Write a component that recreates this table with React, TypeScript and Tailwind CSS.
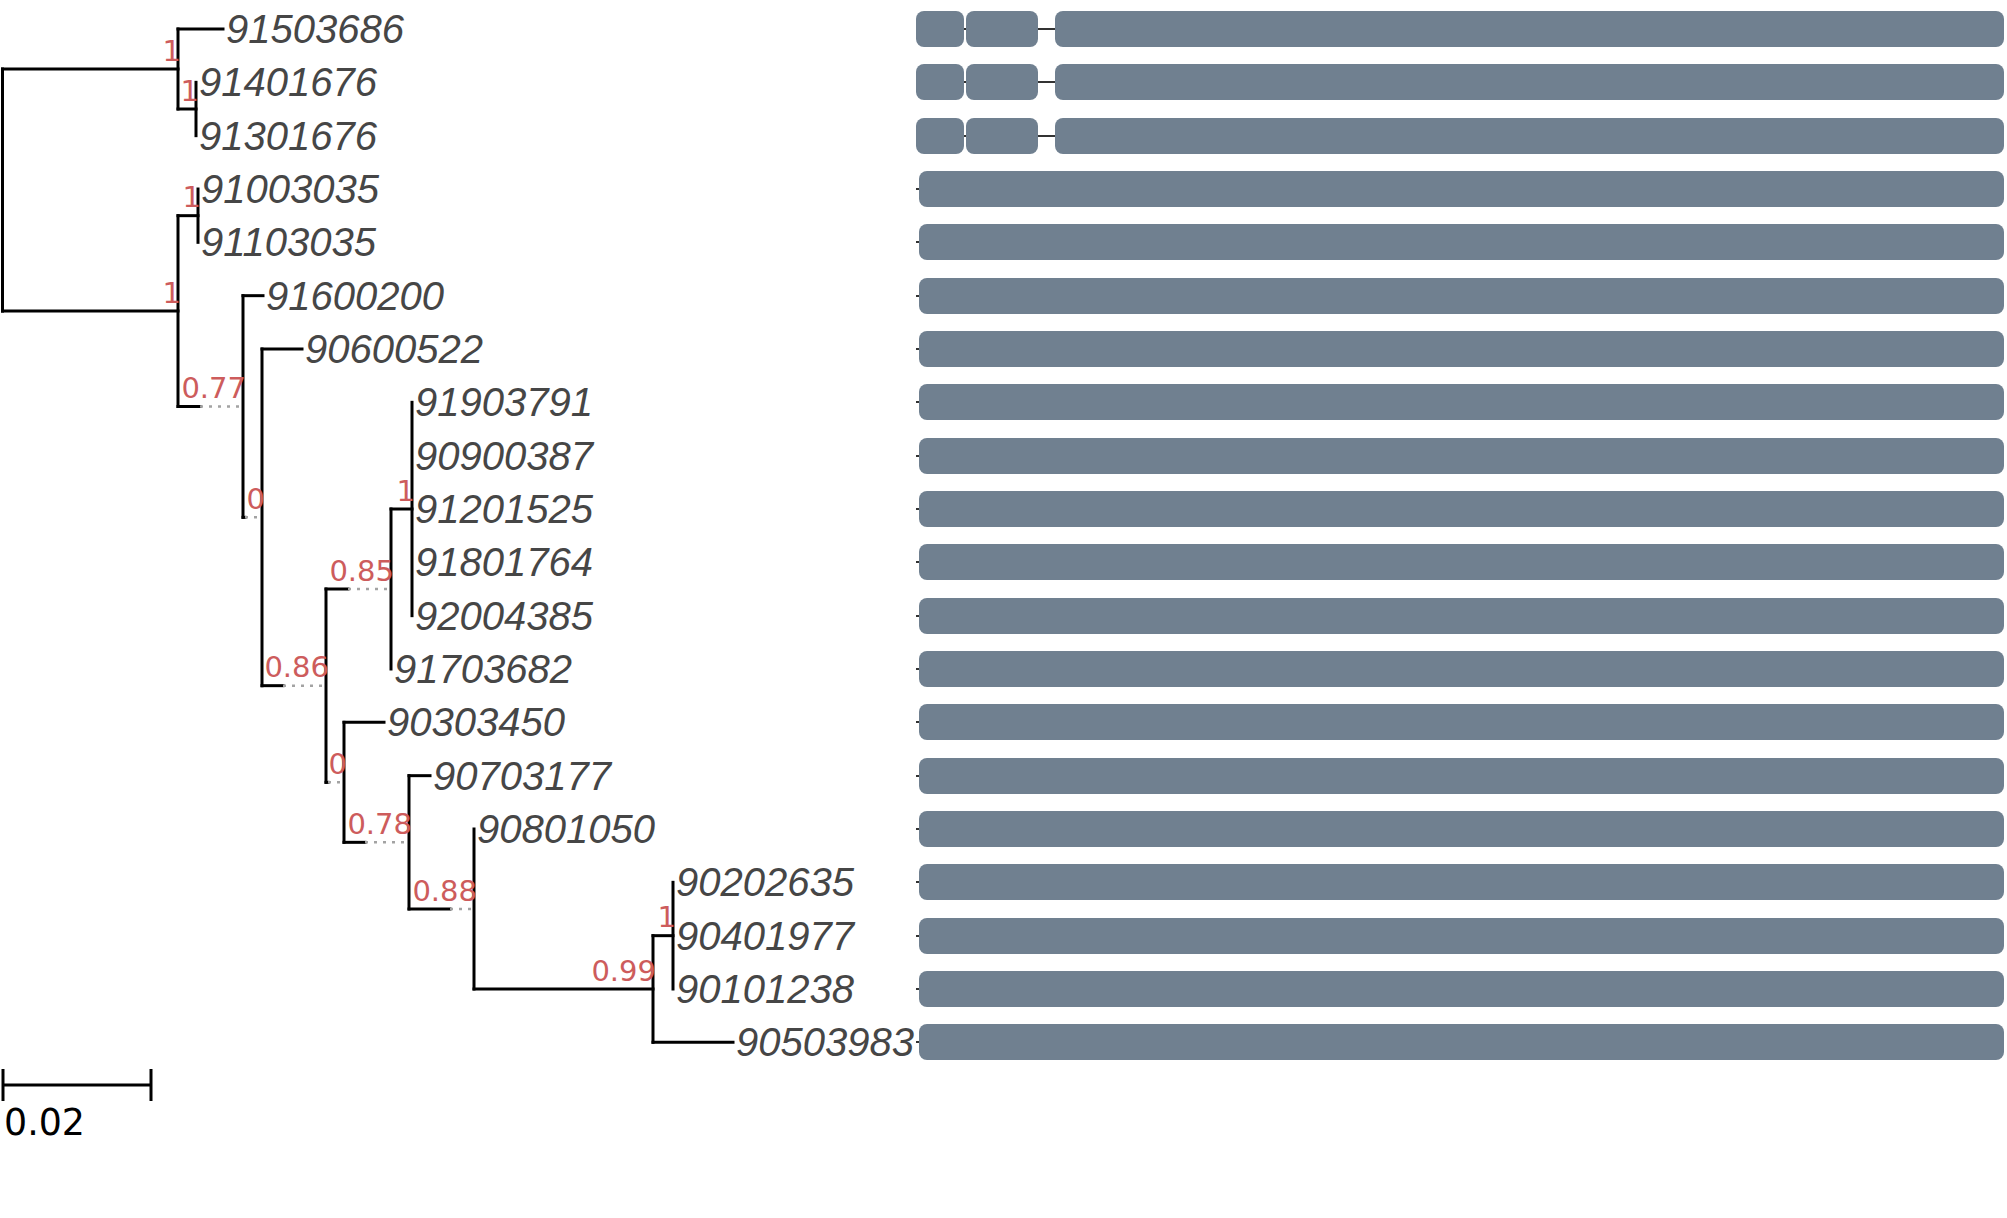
const ROW = 160 / 3;
const y = (i: number) => 29 + (i - 1) * ROW;
const mid = (a: number, b: number) => (a + b) / 2;

// node heights, each one the middle of its first and last child
const yA2 = mid(y(2), y(3));
const yA = mid(y(1), yA2);
const yB1 = mid(y(4), y(5));
const yH = mid(y(8), y(12));
const yF = mid(yH, y(13));
const yL = mid(y(17), y(19));
const yK = mid(yL, y(20));
const yJ = mid(y(16), yK);
const yI = mid(y(15), yJ);
const yG = mid(y(14), yI);
const yE = mid(yF, yG);
const yD = mid(y(7), yE);
const yC = mid(y(6), yD);
const yB = mid(yB1, yC);

type Seg = [number, number, number, number];

const solid: Seg[] = [
  [2.5, yA, 2.5, yB],
  [2.5, yA, 178, yA],
  [2.5, yB, 178, yB],
  [178, y(1), 178, yA2],
  [178, y(1), 223, y(1)],
  [178, yA2, 196, yA2],
  [196, y(2), 196, y(3)],
  [178, yB1, 178, yC],
  [178, yB1, 198, yB1],
  [198, y(4), 198, y(5)],
  [178, yC, 200, yC],
  [243, y(6), 243, yD],
  [243, y(6), 263, y(6)],
  [243, yD, 245, yD],
  [262, y(7), 262, yE],
  [262, y(7), 302, y(7)],
  [262, yE, 283, yE],
  [326, yF, 326, yG],
  [326, yF, 348, yF],
  [391, yH, 391, y(13)],
  [391, yH, 412, yH],
  [412, y(8), 412, y(12)],
  [326, yG, 328, yG],
  [344, y(14), 344, yI],
  [344, y(14), 384, y(14)],
  [344, yI, 365, yI],
  [409, y(15), 409, yJ],
  [409, y(15), 430, y(15)],
  [409, yJ, 450, yJ],
  [474, y(16), 474, yK],
  [474, yK, 653, yK],
  [653, yL, 653, y(20)],
  [653, yL, 673, yL],
  [673, y(17), 673, y(19)],
  [653, y(20), 733, y(20)],
];

// extension lines where the support label is wider than the branch
const dotted: [number, number, number][] = [
  [200, yC, 243],
  [245, yD, 262],
  [283, yE, 326],
  [348, yF, 391],
  [328, yG, 344],
  [365, yI, 409],
  [450, yJ, 474],
];

const leaves: { row: number; x: number; name: string }[] = [
  { row: 1, x: 223, name: "91503686" },
  { row: 2, x: 196, name: "91401676" },
  { row: 3, x: 196, name: "91301676" },
  { row: 4, x: 198, name: "91003035" },
  { row: 5, x: 198, name: "91103035" },
  { row: 6, x: 263, name: "91600200" },
  { row: 7, x: 302, name: "90600522" },
  { row: 8, x: 412, name: "91903791" },
  { row: 9, x: 412, name: "90900387" },
  { row: 10, x: 412, name: "91201525" },
  { row: 11, x: 412, name: "91801764" },
  { row: 12, x: 412, name: "92004385" },
  { row: 13, x: 391, name: "91703682" },
  { row: 14, x: 384, name: "90303450" },
  { row: 15, x: 430, name: "90703177" },
  { row: 16, x: 474, name: "90801050" },
  { row: 17, x: 673, name: "90202635" },
  { row: 18, x: 673, name: "90401977" },
  { row: 19, x: 673, name: "90101238" },
  { row: 20, x: 733, name: "90503983" },
];

const support: { x: number; y: number; text: string }[] = [
  { x: 178, y: yA, text: "1" },
  { x: 196, y: yA2, text: "1" },
  { x: 178, y: yB, text: "1" },
  { x: 198, y: yB1, text: "1" },
  { x: 243, y: yC, text: "0.77" },
  { x: 262, y: yD, text: "0" },
  { x: 326, y: yE, text: "0.86" },
  { x: 391, y: yF, text: "0.85" },
  { x: 412, y: yH, text: "1" },
  { x: 344, y: yG, text: "0" },
  { x: 409, y: yI, text: "0.78" },
  { x: 474, y: yJ, text: "0.88" },
  { x: 653, y: yK, text: "0.99" },
  { x: 673, y: yL, text: "1" },
];

function Tree() {
  return (
    <svg width="916" height="1218" viewBox="0 0 916 1218" className="flex-none">
      {solid.map(([x1, y1, x2, y2], i) => (
        <line key={i} x1={x1} y1={y1} x2={x2} y2={y2} stroke="#000" strokeWidth={3} strokeLinecap="square" />
      ))}
      {dotted.map(([x1, yy, x2], i) => (
        <line key={i} x1={x1} y1={yy} x2={x2} y2={yy} stroke="#a3a3a3" strokeWidth={2.5} strokeDasharray="3 6" />
      ))}
      {leaves.map((l) => (
        <text
          key={l.name}
          x={l.x + 3}
          y={y(l.row) + 14}
          className="font-['Liberation_Sans',Arial,sans-serif] italic text-[40px] fill-[#464646]"
        >
          {l.name}
        </text>
      ))}
      {support.map((s, i) => (
        <text
          key={i}
          x={s.x + 3}
          y={s.y - 8.5}
          textAnchor="end"
          className="font-['DejaVu_Sans',sans-serif] text-[29px] fill-[#cd5c5c]"
        >
          {s.text}
        </text>
      ))}
      <line x1={3} y1={1085} x2={151} y2={1085} stroke="#000" strokeWidth={3} />
      <line x1={3} y1={1069} x2={3} y2={1101} stroke="#000" strokeWidth={3} />
      <line x1={151} y1={1069} x2={151} y2={1101} stroke="#000" strokeWidth={3} />
      <text
        x={4}
        y={1135}
        textLength={81}
        lengthAdjust="spacingAndGlyphs"
        className="font-['DejaVu_Sans',sans-serif] text-[37px] fill-black"
      >
        0.02
      </text>
    </svg>
  );
}

function GeneRow({ split }: { split: boolean }) {
  if (split) {
    return (
      <div className="h-[53.333px] flex items-center">
        <div className="w-[48px] h-[36px] rounded-lg bg-[#708090]" />
        <div className="w-[2px] h-[2px] bg-[#333]" />
        <div className="w-[72px] h-[36px] rounded-lg bg-[#708090]" />
        <div className="w-[17px] h-[2px] bg-[#333]" />
        <div className="flex-1 h-[36px] rounded-lg bg-[#708090]" />
      </div>
    );
  }
  return (
    <div className="h-[53.333px] flex items-center">
      <div className="w-[3px] h-[2px] bg-[#333]" />
      <div className="flex-1 h-[36px] rounded-lg bg-[#708090]" />
    </div>
  );
}

export default function App() {
  return (
    <div className="w-[2007px] h-[1218px] bg-white flex overflow-hidden">
      <Tree />
      <div className="w-[1088px] flex-none flex flex-col pt-[2.33px]">
        {leaves.map((l) => (
          <GeneRow key={l.name} split={l.row <= 3} />
        ))}
      </div>
    </div>
  );
}
